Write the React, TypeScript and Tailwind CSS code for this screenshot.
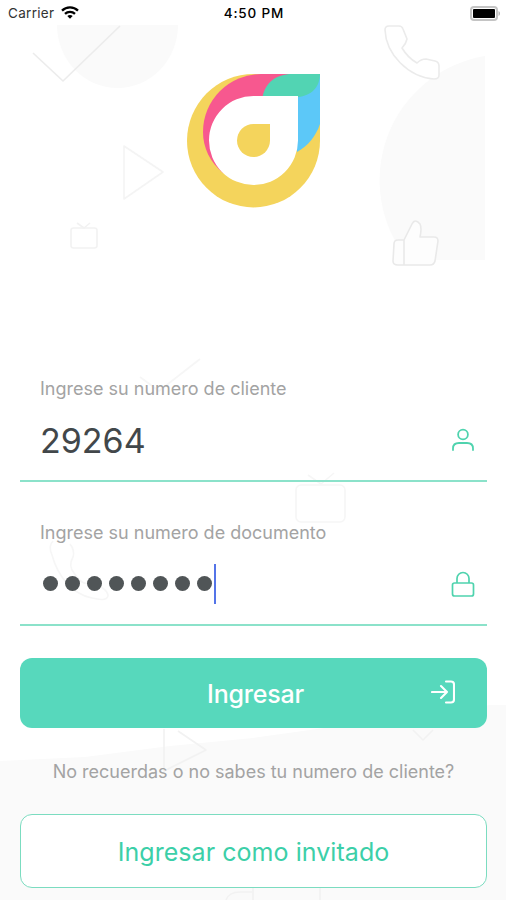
import React from 'react';

function StatusBar() {
  return <div className="grid grid-cols-[1fr_auto_1fr] items-center h-[26px] pl-[8px] pr-[6px] text-black">
      <div className="flex items-center gap-[7px]">
        <span className="text-[13.5px] tracking-[0.3px] text-[#333333]">Carrier</span>
        <svg className="w-[18px] h-[13px] -mt-[2px]" viewBox="0 0 18 13" fill="none" stroke="#000" strokeWidth="2.3">
          <path d="M1 4.6C5.4.3 12.6.3 17 4.6" />
          <path d="M4 7.8C6.8 5.1 11.2 5.1 14 7.8" />
          <path d="M9 12.8L6.3 10C7.8 8.6 10.2 8.6 11.7 10Z" fill="#000" stroke="none" />
        </svg>
      </div>
      <span className="text-center text-[13.5px] font-medium tracking-[0.85px]">4:50 PM</span>
      <svg className="justify-self-end w-[31px] h-[15px]" viewBox="0 0 31 15">
        <rect x="2" y="1" width="26" height="13" rx="3" fill="#fff" stroke="#c4c4c4" strokeWidth="2" />
        <rect x="4" y="3" width="22" height="9" rx="1" fill="#000" />
        <path d="M29.5 5V10C31.5 9 31.5 6 29.5 5Z" fill="#b5b5b5" />
      </svg>
    </div>;
}

function Logo() {
  return <svg className="w-[133px] h-[134px]" viewBox="0 0 133 134">
      <path d="M133 0H66.5A66.5 66.7 0 1 0 133 66.7Z" fill="#f4d45c" />
      <path d="M104 0H74A58 58 0 0 0 16 58C16 74 23 88 36 99L70 66L104 24Z" fill="#f7588f" />
      <path d="M133 0V50C129 62 121 72 110 78V20Z" fill="#5cc8f8" />
      <path d="M133 0H105C89 0 78 9 75.5 23H111C124 22 133 13 133 0Z" fill="#52d4b3" />
      <path d="M111 22H66.7A44.5 44.5 0 1 0 111 66.5Z" fill="#fff" />
      <path d="M83 50H66.5A16.5 16.5 0 1 0 83 66.5Z" fill="#f4d45c" />
    </svg>;
}

// Faint doodles behind the form
function Background() {
  return <svg className="absolute inset-0 -z-10 w-full h-full" viewBox="0 0 506 900" fill="none" stroke="#f2f2f2" strokeWidth="1.6" strokeLinejoin="round">
      <g fill="#fafafa" stroke="none">
        <path d="M57 25A60.5 63 0 0 0 178 25Z" />
        <path d="M485 56A126 126 0 0 0 408 260H485Z" />
        <path d="M0 761L85 757L170 746L253 738L490 705H506V900H0Z" />
      </g>
      <path d="M33 53L63 81L120 26" stroke="#ececec" />
      <path d="M124 146V199L163 172Z" stroke="#f4f4f4" />
      <rect x="71" y="228" width="26" height="20" rx="2.5" />
      <path d="M77 223L84 228L90 223" />
      <path d="M389 26H399Q402 26 403 29L407 39Q406 44 402 48Q408 58 417 63Q421 59 426 59L435 61Q439 62 439 66V75Q439 79 434 79C408 77 386 54 385 30Q385 26 389 26Z" fill="#fff" stroke="#ebebeb" />
      <path d="M394 244Q394 240 398 240H404L412 224Q415 218 420 224Q422 228 420 237H434Q438 237 438 241L435 261Q434 265 430 265H398Q393 265 393 261ZM404 240V265" fill="#fdfdfd" stroke="#e9e9e9" />
      <g stroke="#f6f6f6">
        <path d="M140 377L159 391L200 359" />
        <rect x="296" y="485" width="49" height="37" rx="5" />
        <path d="M308 475L321 484L334 473" />
        <path d="M53 541Q48 546 52 555C57 574 71 594 92 598Q108 602 108 595Q106 587 90 583Q82 586 74 573Q68 566 73 557Q75 550 70 544" />
      </g>
      <path d="M164 729V771L206 750L178 731" />
      <path d="M413 730L423 740L433 730" />
      <path d="M226 900Q229 892 240 892H252M253 888V900M320 888V900" />
    </svg>;
}

function UserIcon() {
  return <svg className="w-6 h-6 -mt-[2px]" viewBox="0 0 24 24" fill="none" stroke="#4fd3ae" strokeWidth="1.8" strokeLinecap="round">
      <circle cx="12" cy="6.5" r="4.9" />
      <path d="M2 22V20.5Q2 15 8 15H16Q22 15 22 20.5V22" />
    </svg>;
}

function LockIcon() {
  return <svg className="w-6 h-[26px] -mt-[2px]" viewBox="0 0 24 26" fill="none" stroke="#4fd3ae" strokeWidth="1.7" strokeLinejoin="round">
      <rect x="1.5" y="12" width="21" height="13" rx="2" />
      <path d="M6 12V7.5A6 6 0 0 1 18 7.5V12" />
    </svg>;
}

function LoginIcon() {
  return <svg className="w-6 h-6" viewBox="0 0 24 24" fill="none" stroke="#fff" strokeWidth="2.1" strokeLinecap="round" strokeLinejoin="round">
      <path d="M1 12H16M10 6L16 12L10 18" />
      <path d="M15 1.5H20Q23 1.5 23 4.5V19.5Q23 22.5 20 22.5H15" />
    </svg>;
}

function Field({
  label,
  icon,
  children
}: {
  label: string;
  icon: React.ReactNode;
  children: React.ReactNode;
}) {
  return <div className="h-[106px] pt-px">
      <div className="h-6 pl-5 leading-6 text-[18px] text-[#a3a3a3] whitespace-nowrap">{label}</div>
      <div className="flex items-center justify-between h-[79px] pl-5 pr-3">
        {children}
        {icon}
      </div>
      <div className="h-[2px] bg-[#8be2ca]" />
    </div>;
}

export default function App() {
  const digits = Array.from({
    length: 8
  });
  return <div className="relative isolate w-[506px] h-[900px] overflow-hidden bg-white font-['Inter',sans-serif]">
      <Background />
      <StatusBar />
      <div className="flex justify-center mt-12 h-[134px]">
        <Logo />
      </div>
      <div className="flex flex-col pl-5 pr-[19px] mt-[168px]">
        <Field label="Ingrese su numero de cliente" icon={<UserIcon />}>
          <span className="text-[34px] text-[#42474a]">29264</span>
        </Field>
        <div className="h-[38px]" />
        <Field label="Ingrese su numero de documento" icon={<LockIcon />}>
          <div className="flex items-center pl-[3px] -mt-[2px]">
            <div className="flex gap-[7px]">
              {digits.map((_, i) => <span key={i} className="w-[15px] h-[15px] rounded-full bg-[#505557]" />)}
            </div>
            <span className="ml-[2px] w-[2px] h-10 bg-[#5474e8]" />
          </div>
        </Field>
        <button className="grid grid-cols-[1fr_auto_1fr] items-center mt-[32px] h-[70px] rounded-[12px] bg-[#57d8bc] pr-8 pl-8 text-white">
          <span />
          <span className="text-[25px] font-medium tracking-[-0.2px] pl-[4px] pt-[3px]">Ingresar</span>
          <span className="justify-self-end pb-[2px]">
            <LoginIcon />
          </span>
        </button>
        <p className="mt-8 h-6 leading-6 text-center text-[18px] text-[#a3a3a3] whitespace-nowrap">
          No recuerdas o no sabes tu numero de cliente?
        </p>
        <button className="mt-[30px] pt-[3px] h-[74px] rounded-[12px] border-[1.5px] border-[#7bdcc0] bg-white text-[25px] tracking-[0.05px] text-[#3ccfa8]">
          Ingresar como invitado
        </button>
      </div>
    </div>;
}
